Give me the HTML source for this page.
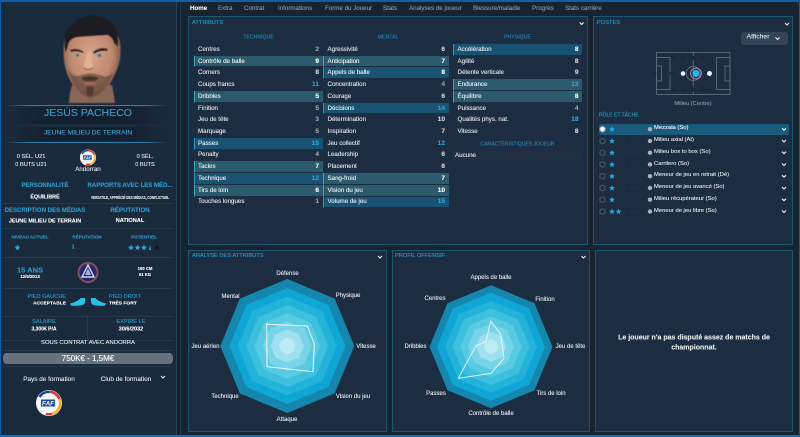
<!DOCTYPE html>
<html><head><meta charset="utf-8">
<style>
*{box-sizing:border-box;margin:0;padding:0}
html,body{width:800px;height:437px;overflow:hidden;background:#14202f}
#p{position:absolute;left:0;top:0;width:800px;height:437px;filter:blur(.25px);overflow:hidden}
body{position:relative;font-family:"Liberation Sans",sans-serif;color:#e6eaee;font-size:6px;-webkit-text-stroke:.1px currentColor}
.t,.c,.r{position:absolute;white-space:nowrap;line-height:1}
.c{transform:translate(-50%,-50%)}.t{transform:translateY(-50%)}.r{transform:translate(-100%,-50%)}
.b{color:#2f9bcb}.w{color:#fff;font-weight:bold}
.ti{font-size:5.7px}.su{font-size:5.2px;color:#2a86b4}
.box{position:absolute;background:#1c2d41;border:1px solid #1e566f}
.hl{position:absolute;height:1px;background:#27394c}
.col{position:absolute;width:129px}
.rw{display:flex;justify-content:space-between;align-items:center;height:11.74px;padding:0 3.5px;border-left:1.5px solid transparent;border-bottom:1px solid transparent;background-clip:padding-box;font-size:6.2px;color:#e2e7eb}
.rw i{font-style:normal;font-weight:bold;font-size:6.6px;color:#d3d9df}
.rw i.h{color:#35a3d6}.rw i.g{color:#9aa5af}
.a{background-color:#2a5a6b;border-left-color:#3aa9b7;color:#eef3f5}
.m{background-color:#1a5273;border-left-color:#2b93c0;color:#eef3f5}
.a i,.m i{color:#fff}
.rl{position:absolute;left:654px;font-size:5.85px;color:#e2e7eb;white-space:nowrap;line-height:1;transform:translateY(-50%)}
.tab{position:absolute;top:9px;transform:translateY(-50%);font-size:6.2px;color:#8f9aa6;white-space:nowrap;line-height:1}
svg{position:absolute;left:0;top:0}
</style></head><body><div id="p">

<!-- backgrounds -->
<div style="position:absolute;left:0;top:0;width:176px;height:437px;background:#1a2a3d"></div>
<div style="position:absolute;left:176px;top:0;width:1px;height:437px;background:#2a4055"></div>
<div style="position:absolute;left:180px;top:0;width:1px;height:437px;background:#24384c"></div>
<div style="position:absolute;left:181px;top:0;width:619px;height:437px;background:#17232f"></div>

<!-- panels -->
<div class="box" style="left:188px;top:16px;width:400px;height:229px"></div>
<div class="box" style="left:593px;top:16px;width:200px;height:229px"></div>
<div class="box" style="left:188px;top:250px;width:199px;height:182px"></div>
<div class="box" style="left:392px;top:250px;width:198px;height:182px"></div>
<div class="box" style="left:595px;top:250px;width:198px;height:182px"></div>

<!-- tabs -->
<span class="tab" style="left:190px;color:#fff;font-weight:bold">Home</span>
<span class="tab" style="left:218px">Extra</span>
<span class="tab" style="left:244px">Contrat</span>
<span class="tab" style="left:278px">Informations</span>
<span class="tab" style="left:325px">Forme du Joueur</span>
<span class="tab" style="left:383px">Stats</span>
<span class="tab" style="left:409px">Analyses de joueur</span>
<span class="tab" style="left:473px">Blessure/maladie</span>
<span class="tab" style="left:532px">Progrès</span>
<span class="tab" style="left:565px">Stats carrière</span>

<!-- attributes -->
<span class="t b ti" style="left:192px;top:24px">ATTRIBUTS</span>
<span class="c su" style="left:258.5px;top:38px">TECHNIQUE</span>
<span class="c su" style="left:388px;top:38px">MENTAL</span>
<span class="c su" style="left:517.5px;top:38px">PHYSIQUE</span>

<div class="col" style="left:193.5px;top:44px">
<div class="rw"><span>Centres</span><i class="g">2</i></div>
<div class="rw a"><span>Contrôle de balle</span><i>9</i></div>
<div class="rw"><span>Corners</span><i>8</i></div>
<div class="rw"><span>Coups francs</span><i class="h">11</i></div>
<div class="rw a"><span>Dribbles</span><i>5</i></div>
<div class="rw"><span>Finition</span><i class="g">5</i></div>
<div class="rw"><span>Jeu de tête</span><i class="g">3</i></div>
<div class="rw"><span>Marquage</span><i class="g">5</i></div>
<div class="rw m"><span>Passes</span><i class="h">15</i></div>
<div class="rw"><span>Penalty</span><i class="g">4</i></div>
<div class="rw a"><span>Tacles</span><i>7</i></div>
<div class="rw m"><span>Technique</span><i class="h">12</i></div>
<div class="rw a"><span>Tirs de loin</span><i>6</i></div>
<div class="rw"><span>Touches longues</span><i class="g">1</i></div>
</div>

<div class="col" style="left:323px;top:44px;width:125.5px">
<div class="rw"><span>Agressivité</span><i>6</i></div>
<div class="rw a"><span>Anticipation</span><i>7</i></div>
<div class="rw m"><span>Appels de balle</span><i>8</i></div>
<div class="rw"><span>Concentration</span><i class="g">4</i></div>
<div class="rw"><span>Courage</span><i>6</i></div>
<div class="rw m"><span>Décisions</span><i class="h">14</i></div>
<div class="rw"><span>Détermination</span><i>10</i></div>
<div class="rw"><span>Inspiration</span><i>7</i></div>
<div class="rw"><span>Jeu collectif</span><i class="h">12</i></div>
<div class="rw"><span>Leadership</span><i>6</i></div>
<div class="rw"><span>Placement</span><i>6</i></div>
<div class="rw a"><span>Sang-froid</span><i>7</i></div>
<div class="rw a"><span>Vision du jeu</span><i>10</i></div>
<div class="rw m"><span>Volume de jeu</span><i class="h">15</i></div>
</div>

<div class="col" style="left:453px;top:44px">
<div class="rw m"><span>Accélération</span><i>8</i></div>
<div class="rw"><span>Agilité</span><i>8</i></div>
<div class="rw"><span>Détente verticale</span><i>9</i></div>
<div class="rw a"><span>Endurance</span><i class="h">13</i></div>
<div class="rw a"><span>Équilibre</span><i>8</i></div>
<div class="rw"><span>Puissance</span><i class="g">4</i></div>
<div class="rw"><span>Qualités phys. nat.</span><i class="h">18</i></div>
<div class="rw"><span>Vitesse</span><i>8</i></div>
</div>
<span class="c su" style="left:517.5px;top:145px;font-size:5.1px">CARACTÉRISTIQUES JOUEUR</span>
<div style="position:absolute;left:453px;top:150.5px;width:129px;height:10.5px;background:#212f42"></div>
<span class="t" style="left:455px;top:155.7px;font-size:6.2px">Aucune</span>

<!-- postes -->
<span class="t b ti" style="left:597px;top:24px">POSTES</span>
<div style="position:absolute;left:740.5px;top:32px;width:47px;height:13px;background:#334458;border-radius:3px"></div>
<span class="c" style="left:758px;top:38px;color:#e5e9ed;font-size:6.8px">Afficher</span>
<span class="c" style="left:693px;top:104.5px;font-size:5.7px;color:#8f9aa5">Milieu (Centre)</span>
<span class="t b" style="left:599px;top:116px;font-size:5px">RÔLE ET TÂCHE</span>
<div style="position:absolute;left:599px;top:123.5px;width:189.5px;height:11px;background:#1a5a7d;border-radius:2px"></div>
<span class="rl" style="top:129.2px;color:#fff">Mezzala (So)</span>
<span class="rl" style="top:141px">Milieu axial (At)</span>
<span class="rl" style="top:152.7px">Milieu box to box (So)</span>
<span class="rl" style="top:164.5px">Carrilero (So)</span>
<span class="rl" style="top:176.2px">Meneur de jeu en retrait (Dé)</span>
<span class="rl" style="top:188px">Meneur de jeu avancé (So)</span>
<span class="rl" style="top:199.7px">Milieu récupérateur (So)</span>
<span class="rl" style="top:211.5px">Meneur de jeu libre (So)</span>

<!-- radar titles -->
<span class="t b ti" style="left:192px;top:257px">ANALYSE DES ATTRIBUTS</span>
<span class="t b ti" style="left:395px;top:257px">PROFIL OFFENSIF</span>

<!-- radar labels -->
<span class="c" style="left:287.5px;top:274px">Défense</span>
<span class="c" style="left:348px;top:296px">Physique</span>
<span class="c" style="left:230.5px;top:296.5px">Mental</span>
<span class="c" style="left:366px;top:346.5px">Vitesse</span>
<span class="c" style="left:205.5px;top:346.5px">Jeu aérien</span>
<span class="c" style="left:353px;top:397px">Vision du jeu</span>
<span class="c" style="left:225px;top:397px">Technique</span>
<span class="c" style="left:287px;top:420px">Attaque</span>

<span class="c" style="left:491px;top:278px">Appels de balle</span>
<span class="c" style="left:545px;top:299.5px">Finition</span>
<span class="c" style="left:435px;top:299px">Centres</span>
<span class="c" style="left:570.5px;top:346.5px">Jeu de tête</span>
<span class="c" style="left:415.5px;top:346.5px">Dribbles</span>
<span class="c" style="left:551px;top:394px">Tirs de loin</span>
<span class="c" style="left:436px;top:394px">Passes</span>
<span class="c" style="left:491px;top:414px">Contrôle de balle</span>

<div class="c w" style="left:694px;top:338px;font-size:7px;color:#e8ecef">Le joueur n'a pas disputé assez de matchs de</div>
<div class="c w" style="left:694px;top:348px;font-size:7px;color:#e8ecef">championnat.</div>

<!-- sidebar text -->
<div style="position:absolute;left:5px;top:105px;width:163px;height:1px;background:linear-gradient(90deg,transparent,#2f7fa8 15%,#2f7fa8 85%,transparent)"></div>
<div style="position:absolute;left:5px;top:107px;width:163px;height:17px;background:linear-gradient(90deg,transparent,#121f2e 30%,#121f2e 70%,transparent)"></div>
<div style="position:absolute;left:5px;top:127px;width:163px;height:14px;background:linear-gradient(90deg,transparent,#121f2e 30%,#121f2e 70%,transparent)"></div>
<div style="position:absolute;left:5px;top:141.5px;width:163px;height:1px;background:linear-gradient(90deg,transparent,#2f7fa8 15%,#2f7fa8 85%,transparent)"></div>
<span class="c" style="left:88px;top:112.5px;font-size:10.5px;color:#3f9dcd">JESÚS PACHECO</span>
<span class="c" style="left:88px;top:134px;font-size:6.7px;color:#4aa4d2">JEUNE MILIEU DE TERRAIN</span>

<span class="c" style="left:31px;top:157.5px;font-size:5.6px">0 SÉL. U21</span>
<span class="c" style="left:31px;top:166px;font-size:5.6px">0 BUTS U21</span>
<span class="c" style="left:88px;top:170px;font-size:6.2px">Andorran</span>
<span class="c" style="left:145px;top:157.5px;font-size:5.6px">0 SÉL.</span>
<span class="c" style="left:145px;top:166px;font-size:5.6px">0 BUTS</span>

<span class="c b" style="left:45px;top:186px;font-size:6px;font-weight:bold">PERSONNALITÉ</span>
<span class="c b" style="left:130px;top:186px;font-size:6.05px;font-weight:bold">RAPPORTS AVEC LES MÉD...</span>
<span class="c w" style="left:45px;top:197.5px;font-size:5.4px">ÉQUILIBRÉ</span>
<span class="c w" style="left:130px;top:197.5px;font-size:4.2px;font-weight:bold;color:#dfe4e8;transform:translate(-50%,-50%) scaleX(.74)">VERSATILE, APPRÉCIÉ DES MÉDIAS, CONFLICTUEL</span>
<div class="hl" style="left:4px;top:203px;width:168px"></div>
<span class="c b" style="left:45px;top:210.5px;font-size:6.05px;font-weight:bold">DESCRIPTION DES MÉDIAS</span>
<span class="c b" style="left:130px;top:210.5px;font-size:6.2px;font-weight:bold">RÉPUTATION</span>
<span class="c w" style="left:45px;top:222px;font-size:5.4px">JEUNE MILIEU DE TERRAIN</span>
<span class="c w" style="left:130px;top:222px;font-size:5.6px">NATIONAL</span>
<div class="hl" style="left:4px;top:228px;width:168px"></div>
<span class="c b" style="left:30px;top:238px;font-size:4.6px;font-weight:bold">NIVEAU ACTUEL</span>
<span class="c b" style="left:87px;top:238px;font-size:4.6px;font-weight:bold">RÉPUTATION</span>
<span class="c b" style="left:144px;top:238px;font-size:4.6px;font-weight:bold">POTENTIEL</span>
<span class="c b" style="left:73px;top:247.5px;font-size:5.5px;font-weight:bold">1</span>
<div class="hl" style="left:4px;top:257px;width:168px"></div>
<span class="c b" style="left:30px;top:269.5px;font-size:7.5px;font-weight:bold">15 ANS</span>
<span class="c w" style="left:30px;top:277px;font-size:4.4px">12/6/2013</span>
<span class="c w" style="left:145px;top:269px;font-size:4.2px">180 CM</span>
<span class="c w" style="left:145px;top:275px;font-size:4.2px">61 KG</span>
<div class="hl" style="left:4px;top:288px;width:168px"></div>
<span class="r b" style="left:66px;top:298px;font-size:5.6px">PIED GAUCHE</span>
<span class="r w" style="left:66px;top:305px;font-size:4.9px">ACCEPTABLE</span>
<span class="t b" style="left:109px;top:298px;font-size:5.6px">PIED DROIT</span>
<span class="t w" style="left:109px;top:305px;font-size:4.9px">TRÈS FORT</span>
<div class="hl" style="left:4px;top:316px;width:168px"></div>
<div class="hl" style="left:87px;top:317px;width:1px;height:23px"></div>
<span class="c b" style="left:44px;top:322.5px;font-size:5.6px">SALAIRE</span>
<span class="c w" style="left:44px;top:330px;font-size:5px">3,300€ P/A</span>
<span class="c b" style="left:131px;top:322.5px;font-size:5.6px">EXPIRE LE</span>
<span class="c w" style="left:131px;top:330px;font-size:5.5px">30/6/2032</span>
<div class="hl" style="left:4px;top:340px;width:168px"></div>
<span class="c" style="left:88px;top:343.5px;font-size:5.9px">SOUS CONTRAT AVEC ANDORRA</span>
<div class="hl" style="left:4px;top:349.5px;width:168px"></div>
<div style="position:absolute;left:3px;top:352.5px;width:170px;height:11.5px;border-radius:4px;background:#68727d"></div>
<span class="c" style="left:88px;top:359px;font-size:8px;color:#fff">750K€ - 1,5M€</span>
<div class="hl" style="left:4px;top:366px;width:168px"></div>
<span class="c" style="left:49px;top:380px;font-size:6.4px">Pays de formation</span>
<span class="c" style="left:126px;top:380px;font-size:6.4px">Club de formation</span>

<svg width="800" height="437" viewBox="0 0 800 437">
<defs>
<radialGradient id="sk" cx="48%" cy="42%" r="60%"><stop offset="0" stop-color="#d9a48c"/><stop offset=".6" stop-color="#c08a70"/><stop offset="1" stop-color="#6e4c40"/></radialGradient>
<filter id="bl" x="-10%" y="-10%" width="120%" height="120%"><feGaussianBlur stdDeviation=".6"/></filter>
<g id="st"><path d="M0-2.9.9-.9 3-.8 1.3.6 1.9 2.7 0 1.5-1.9 2.7-1.3.6-3-.8-.9-.9Z"/></g>
<g id="dim" fill="#1f3044"><use href="#st" x="6.5"/><use href="#st" x="13"/><use href="#st" x="19.5"/><use href="#st" x="26"/></g>
<g id="faf">
<circle r="13" fill="#f6f7f8"/>
<path d="M-9.5-6A11.2 11.2 0 0 1 0-11.2" fill="none" stroke="#1f4a96" stroke-width="2.6"/>
<path d="M0-11.2A11.2 11.2 0 0 1 10.5-4" fill="none" stroke="#d8323f" stroke-width="2.6"/>
<path d="M10.5-4A11.2 11.2 0 0 1 3 10.8" fill="none" stroke="#f0b429" stroke-width="2.6"/>
<path d="M3 10.8A11.2 11.2 0 0 1-3 10.8" fill="none" stroke="#d8323f" stroke-width="2.2"/>
<rect x="-8" y="-3.5" width="14" height="7" fill="#1f4a96"/>
<text x="-1" y="2.4" text-anchor="middle" font-family="Liberation Sans" font-size="6.5" font-weight="bold" font-style="italic" fill="#fff">FAF</text>
</g>
<g id="ch"><path d="M-2-1 0 1 2-1" fill="none" stroke="#eef2f5" stroke-width="1.1"/></g>
</defs>

<!-- face -->
<g filter="url(#bl)">
<path d="M72 85Q69 95 69 103H115Q114 95 112 85Z" fill="#8a6656"/>
<path d="M64 42Q62 64 69 78Q76 94 90 98Q105 95 113 78Q123 60 120 42Q116 24 92 24Q68 24 64 42Z" fill="url(#sk)"/>
<path d="M68 70Q74 91 90 98Q106 94 114 72Q108 78 103 76Q90 71 79 76Q73 77 68 70Z" fill="#6a4c3f" opacity=".7"/>
<path d="M81 78Q90 74 99 78Q96 82 90 81Q84 82 81 78Z" fill="#4a342c"/>
<path d="M84 83Q90 82 96 83L95 85Q90 84 85 85Z" fill="#a5695c"/>
<path d="M86 87Q90 86 94 87L93 95Q90 97 87 95Z" fill="#4a342c" opacity=".8"/>
<path d="M65 50Q61 23 88 16Q108 14 115 28Q119 36 118 47L114 43Q113 38 108 35L78 37Q70 38 68 45L66 52Z" fill="#1a1c23"/>
<path d="M70 50Q77 47 84 52L83 53Q76 50 71 52Z" fill="#2a1f1c"/>
<path d="M93 52Q100 46 108 49L107 51Q100 50 94 54Z" fill="#2a1f1c"/>
<ellipse cx="77" cy="55.3" rx="4.4" ry="1.9" fill="#a49f93"/>
<ellipse cx="99.5" cy="55.3" rx="4.4" ry="1.9" fill="#a49f93"/>
<circle cx="77.5" cy="55.3" r="1.4" fill="#4f5f5f"/>
<circle cx="99.5" cy="55.3" r="1.4" fill="#4f5f5f"/>
<path d="M88 52Q84 62 84 67Q88 71 93 67Q91 60 91 52Z" fill="#e2b095"/>
<path d="M84 68Q88 71 93 68" fill="none" stroke="#7c5142" stroke-width="1"/>
</g>

<!-- faf small logo and club logo -->
<use href="#faf" transform="translate(88 157.5) scale(.62)"/>
<circle cx="88" cy="272.5" r="10.5" fill="#8b4e5f"/>
<circle cx="88" cy="272.5" r="8.6" fill="#26296c"/>
<path d="M88 265 94 277H82Z" fill="none" stroke="#cfd4f2" stroke-width="1.4"/>
<path d="M88 268.5 91 275H85Z" fill="#aab1ea"/>
<use href="#faf" transform="translate(49 403)"/>

<!-- sidebar stars -->
<g fill="#35a9de">
<use href="#st" transform="translate(17.5 247.5)"/>
<use href="#st" transform="translate(131 247.5)"/><use href="#st" transform="translate(137.5 247.5)"/><use href="#st" transform="translate(144 247.5)"/>
</g>
<path d="M150 245 151 250H149Z" fill="#35a9de"/><use href="#st" transform="translate(157 247.5)" fill="#0f1721"/>

<!-- boots -->
<path d="M70 303.5Q77 302 81 298L85 298Q85.500 302 84 304.500Q77 306.500 71 305.500Z" fill="#27c3e6"/>
<path d="M106 303.5Q99 302 95 298L91 298Q90.500 302 92 304.500Q99 306.500 105 305.500Z" fill="#27c3e6"/>

<use href="#ch" transform="translate(163 377)"/>
<use href="#ch" transform="translate(581.7 23.5)"/>
<use href="#ch" transform="translate(787 24)"/>
<use href="#ch" transform="translate(777.5 38.5)"/>
<use href="#ch" transform="translate(380 257)"/>
<use href="#ch" transform="translate(583.5 257)"/>

<!-- pitch -->
<g fill="none" stroke="#5f6b7a" stroke-width=".9">
<rect x="656.5" y="52.5" width="73.5" height="42"/>
<path d="M693.3 52.5V94.5"/>
<rect x="656.5" y="57.5" width="13.5" height="32"/>
<rect x="716.5" y="57.5" width="13.5" height="32"/>
<rect x="656.5" y="66" width="5" height="15"/>
<rect x="725" y="66" width="5" height="15"/>
<circle cx="693.3" cy="73.5" r="7"/>
</g>
<g fill="#1a2838"><circle cx="674" cy="58" r="2.4"/><circle cx="683" cy="58" r="2.4"/><circle cx="693" cy="58" r="2.4"/><circle cx="703" cy="58" r="2.4"/><circle cx="674" cy="89" r="2.4"/><circle cx="683" cy="89" r="2.4"/><circle cx="693" cy="89" r="2.4"/><circle cx="703" cy="89" r="2.4"/><circle cx="654" cy="73.5" r="2.4"/><circle cx="672" cy="73.5" r="2.4"/></g>
<circle cx="683" cy="73.5" r="2.3" fill="#e8f8fc"/>
<circle cx="709.5" cy="73.5" r="2.5" fill="#e8f8fc"/>
<circle cx="696" cy="73.5" r="5.4" fill="none" stroke="#c994c6" stroke-width=".8"/>
<circle cx="696" cy="73.5" r="3.6" fill="#22b3ee"/>

<!-- role rows -->
<g fill="none" stroke="#4a5866" stroke-width="1.1">
<circle cx="602.5" cy="141" r="2.6"/><circle cx="602.5" cy="152.7" r="2.6"/><circle cx="602.5" cy="164.5" r="2.6"/><circle cx="602.5" cy="176.2" r="2.6"/><circle cx="602.5" cy="188" r="2.6"/><circle cx="602.5" cy="199.7" r="2.6"/><circle cx="602.5" cy="211.5" r="2.6"/>
</g>
<circle cx="602.5" cy="129.2" r="2.4" fill="#fff"/><circle cx="602.5" cy="129.2" r="2.9" fill="none" stroke="#8fa9b8" stroke-width=".6"/>
<use href="#dim" transform="translate(612 141)"/><use href="#dim" transform="translate(612 152.7)"/><use href="#dim" transform="translate(612 164.5)"/><use href="#dim" transform="translate(612 176.2)"/><use href="#dim" transform="translate(612 188)"/><use href="#dim" transform="translate(612 199.7)"/><use href="#dim" transform="translate(612 211.5)"/>
<g fill="#27a8e2">
<use href="#st" transform="translate(612 129.2)"/><use href="#st" transform="translate(612 141)"/><use href="#st" transform="translate(612 152.7)"/><use href="#st" transform="translate(612 164.5)"/><use href="#st" transform="translate(612 176.2)"/><use href="#st" transform="translate(612 188)"/><use href="#st" transform="translate(612 199.7)"/><use href="#st" transform="translate(612 211.5)"/><use href="#st" transform="translate(618.5 211.5)"/>
</g>
<g fill="#a9b3bd">
<circle cx="650" cy="129.2" r="2.2"/><circle cx="650" cy="141" r="2.2"/><circle cx="650" cy="152.7" r="2.2"/><circle cx="650" cy="164.5" r="2.2"/><circle cx="650" cy="176.2" r="2.2"/><circle cx="650" cy="188" r="2.2"/><circle cx="650" cy="199.7" r="2.2"/><circle cx="650" cy="211.5" r="2.2"/>
</g>
<g transform="translate(784 0)">
<use href="#ch" y="129.2"/><use href="#ch" y="141"/><use href="#ch" y="152.7"/><use href="#ch" y="164.5"/><use href="#ch" y="176.2"/><use href="#ch" y="188"/><use href="#ch" y="199.7"/><use href="#ch" y="211.5"/>
</g>

<!-- radar 1: R=67 -->
<g transform="translate(287.3 346)">
<polygon fill="#1586ad" points="0,-67 47.4,-47.4 67,0 47.4,47.4 0,67 -47.4,47.4 -67,0 -47.4,-47.4"/>
<polygon fill="#0fa6d6" points="0,-58 41,-41 58,0 41,41 0,58 -41,41 -58,0 -41,-41"/>
<polygon fill="#23b2da" points="0,-49.5 35,-35 49.5,0 35,35 0,49.5 -35,35 -49.5,0 -35,-35"/>
<polygon fill="#3cc0de" points="0,-41 29,-29 41,0 29,29 0,41 -29,29 -41,0 -29,-29"/>
<polygon fill="#58cbe3" points="0,-33 23.3,-23.3 33,0 23.3,23.3 0,33 -23.3,23.3 -33,0 -23.3,-23.3"/>
<polygon fill="#78d5e9" points="0,-24.5 17.3,-17.3 24.5,0 17.3,17.3 0,24.5 -17.3,17.3 -24.5,0 -17.3,-17.3"/>
<polygon fill="#a0e1f1" points="0,-16.5 11.7,-11.7 16.5,0 11.7,11.7 0,16.5 -11.7,11.7 -16.5,0 -11.7,-11.7"/>
<polygon fill="#bdebf6" points="0,-8.3 5.9,-5.9 8.3,0 5.9,5.9 0,8.3 -5.9,5.9 -8.3,0 -5.9,-5.9"/>
</g>
<polygon fill="none" stroke="#effbfd" stroke-width="1" points="266.7,324.3 307.3,326 314.3,344 313,371.7 267,366.7"/>

<!-- radar 2: R=61.5 -->
<g transform="translate(491 346.7)">
<polygon fill="#1586ad" points="0,-61.5 43.5,-43.5 61.5,0 43.5,43.5 0,61.5 -43.5,43.5 -61.5,0 -43.5,-43.5"/>
<polygon fill="#0fa6d6" points="0,-54 38.2,-38.2 54,0 38.2,38.2 0,54 -38.2,38.2 -54,0 -38.2,-38.2"/>
<polygon fill="#23b2da" points="0,-46 32.5,-32.5 46,0 32.5,32.5 0,46 -32.5,32.5 -46,0 -32.5,-32.5"/>
<polygon fill="#3cc0de" points="0,-38.5 27.2,-27.2 38.5,0 27.2,27.2 0,38.5 -27.2,27.2 -38.5,0 -27.2,-27.2"/>
<polygon fill="#58cbe3" points="0,-30.5 21.6,-21.6 30.5,0 21.6,21.6 0,30.5 -21.6,21.6 -30.5,0 -21.6,-21.6"/>
<polygon fill="#78d5e9" points="0,-23 16.3,-16.3 23,0 16.3,16.3 0,23 -16.3,16.3 -23,0 -16.3,-16.3"/>
<polygon fill="#a0e1f1" points="0,-15 10.6,-10.6 15,0 10.6,10.6 0,15 -10.6,10.6 -15,0 -10.6,-10.6"/>
<polygon fill="#bdebf6" points="0,-7.5 5.3,-5.3 7.5,0 5.3,5.3 0,7.5 -5.3,5.3 -7.5,0 -5.3,-5.3"/>
</g>
<polygon fill="none" stroke="#effbfd" stroke-width=".9" points="490.7,321 500.7,334.3 504,358.3 491,373.3 458.3,378.3 476,345.7 486,341.7"/>
</svg>

<!-- outer frame -->
<div style="position:absolute;left:0;top:0;width:800px;height:2px;background:#0e5ea8"></div>
<div style="position:absolute;left:0;top:435px;width:800px;height:2px;background:#0e74c0"></div>
<div style="position:absolute;left:0;top:0;width:1px;height:437px;background:#0e5ea8"></div>
<div style="position:absolute;left:799px;top:0;width:1px;height:437px;background:#0e5ea8"></div>
</div></body></html>
